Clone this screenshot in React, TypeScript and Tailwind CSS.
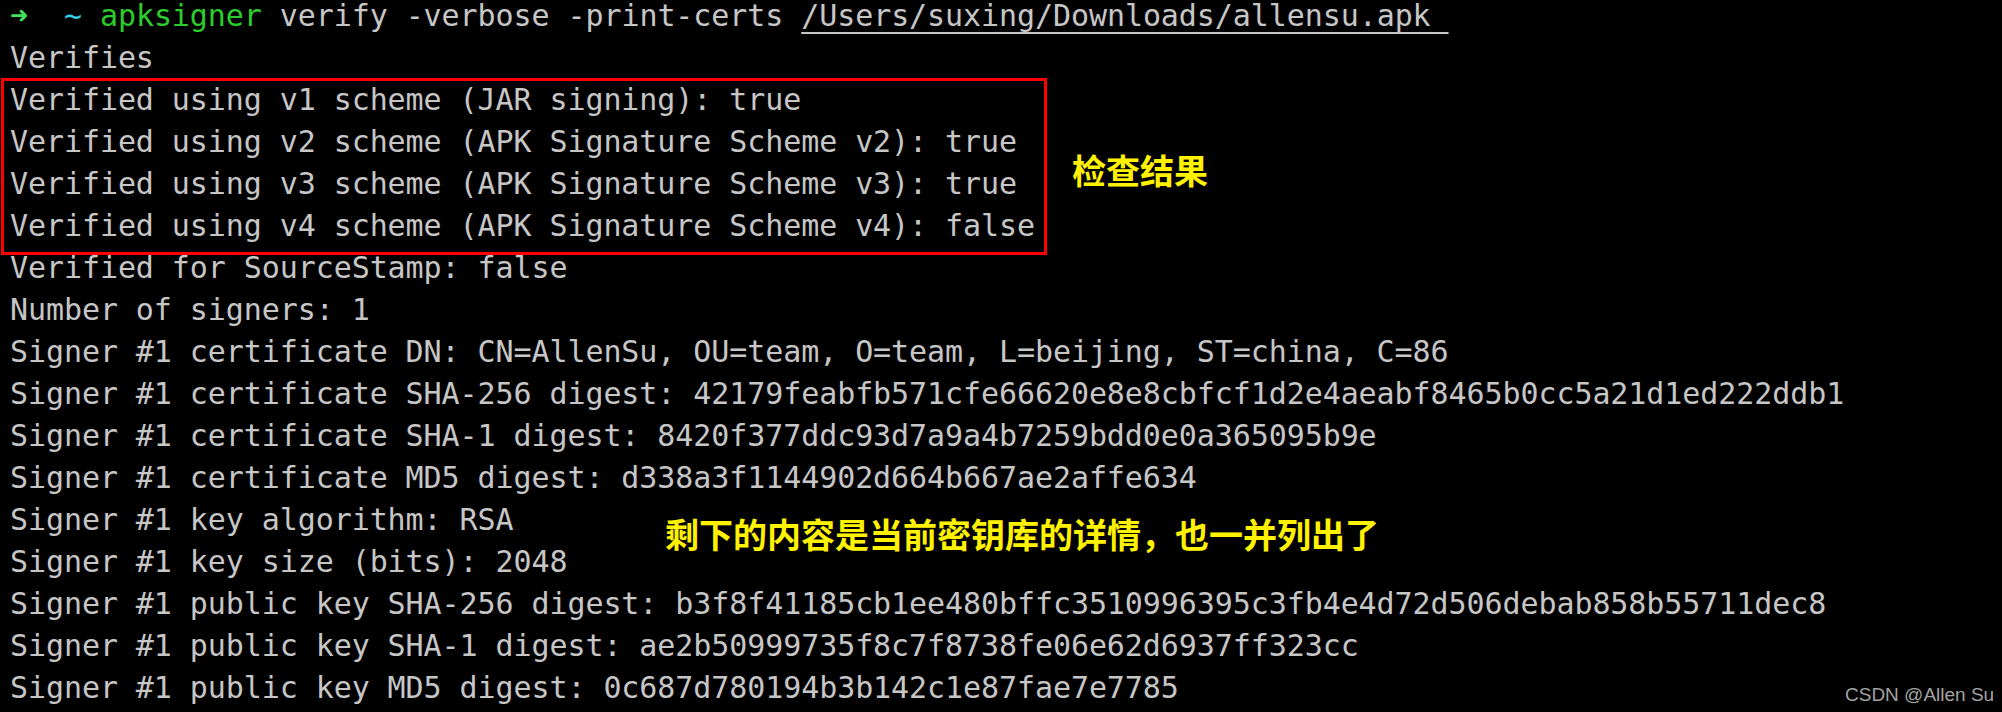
const lines: string[] = [
  "Verifies",
  "Verified using v1 scheme (JAR signing): true",
  "Verified using v2 scheme (APK Signature Scheme v2): true",
  "Verified using v3 scheme (APK Signature Scheme v3): true",
  "Verified using v4 scheme (APK Signature Scheme v4): false",
  "Verified for SourceStamp: false",
  "Number of signers: 1",
  "Signer #1 certificate DN: CN=AllenSu, OU=team, O=team, L=beijing, ST=china, C=86",
  "Signer #1 certificate SHA-256 digest: 42179feabfb571cfe66620e8e8cbfcf1d2e4aeabf8465b0cc5a21d1ed222ddb1",
  "Signer #1 certificate SHA-1 digest: 8420f377ddc93d7a9a4b7259bdd0e0a365095b9e",
  "Signer #1 certificate MD5 digest: d338a3f1144902d664b667ae2affe634",
  "Signer #1 key algorithm: RSA",
  "Signer #1 key size (bits): 2048",
  "Signer #1 public key SHA-256 digest: b3f8f41185cb1ee480bffc3510996395c3fb4e4d72d506debab858b55711dec8",
  "Signer #1 public key SHA-1 digest: ae2b50999735f8c7f8738fe06e62d6937ff323cc",
  "Signer #1 public key MD5 digest: 0c687d780194b3b142c1e87fae7e7785",
];

export default function App() {
  return (
    <div className="relative w-[2002px] h-[712px] overflow-hidden bg-black">
      {/* terminal output */}
      <div className="-mt-[5px] pl-[10px] font-['DejaVu_Sans_Mono',monospace] text-[30px] leading-[42px] tracking-[-0.08px] text-[#c6c6c6] whitespace-pre">
        <div>
          <span className="inline-block w-[18px] text-[#3ee05c] font-bold">➜</span>
          {"  "}
          <span className="text-[#2fd4e6]">~</span>{" "}
          <span className="text-[#2ccc2c]">apksigner</span> verify -verbose -print-certs{" "}
          <span className="underline decoration-2 underline-offset-[6px]">/Users/suxing/Downloads/allensu.apk </span>
        </div>
        {lines.map((line, i) => (
          <div key={i}>{line}</div>
        ))}
      </div>

      {/* annotations */}
      <div className="absolute left-[1px] top-[78px] w-[1046px] h-[177px] border-[3px] border-[#ff0000]" />
      <div className="absolute left-[1072px] top-[153px] font-['Noto_Sans_CJK_SC',sans-serif] font-bold text-[34px] leading-[34px] text-[#fff200]">
        检查结果
      </div>
      <div className="absolute left-[665px] top-[517px] font-['Noto_Sans_CJK_SC',sans-serif] font-bold text-[34px] leading-[34px] text-[#fff200] whitespace-nowrap">
        剩下的内容是当前密钥库的详情，也一并列出了
      </div>
      <div className="absolute left-[1845px] top-[684px] font-['Liberation_Sans',sans-serif] text-[19px] leading-[22px] text-[#a3a3a3] whitespace-nowrap">
        CSDN @Allen Su
      </div>
    </div>
  );
}
